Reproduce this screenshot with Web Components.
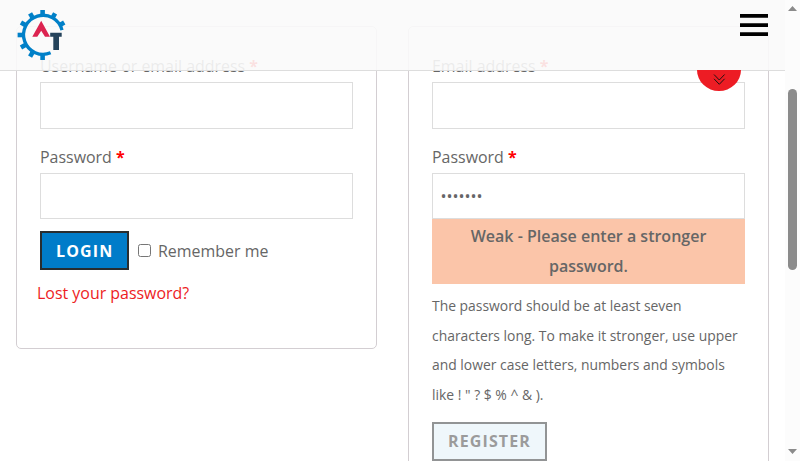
<!DOCTYPE html>
<html lang="en"><head><meta charset="utf-8"><title>My account</title>
<style>
body{margin:0;background:#fff;font:16px/29.6px "Open Sans",sans-serif;color:#666;overflow:hidden}
</style></head><body>
<account-page>
  <site-header slot="header"></site-header>
  <form-panel class="login">
    <form-field label="Username or email address"></form-field>
    <form-field label="Password" kind="password"></form-field>
    <login-actions></login-actions>
  </form-panel>
  <form-panel class="register">
    <form-field label="Email address"></form-field>
    <form-field label="Password" kind="password" value="1234567"></form-field>
    <password-advice></password-advice>
    <action-button muted>REGISTER</action-button>
  </form-panel>
  <scroll-rail slot="rail"></scroll-rail>
</account-page>
<script>
function define(name, html) {
  customElements.define(name, class extends HTMLElement {
    constructor() {
      super();
      this.attachShadow({mode: 'open'}).innerHTML = html;
    }
  });
}
define('account-page', `<style>
:host{display:grid;grid-template-columns:785px 15px;height:461px;overflow:hidden;position:relative}
main{display:grid;grid-template-columns:361px 361px;column-gap:31px;padding:26px 16px 0;align-items:start;height:461px;box-sizing:border-box;overflow:hidden}
::slotted(.login){height:323px}
::slotted(.register){height:470px}
</style><slot name="header"></slot><main><slot></slot></main><slot name="rail"></slot>`);

define('form-panel', `<style>
:host{display:block;box-sizing:border-box;border:1px solid #d3ced2;border-radius:5px;padding:24px 23px 0}
</style><slot></slot>`);

customElements.define('form-field', class extends HTMLElement {
  constructor() {
    super();
    this.attachShadow({mode: 'open'}).innerHTML = `<style>
:host{display:block;height:91px}
label{display:block;height:31px;line-height:30px;font-size:15.95px}
b{color:red;font-weight:700}
input{display:block;box-sizing:border-box;width:313px;height:47px;border:1px solid #ddd;padding:0 7.5px;font:16px "Open Sans",sans-serif;color:#666;background:#fff;margin:0;outline:0}
:host([kind=password]) input{height:46px}
</style><label></label><input>`;
    const label = this.shadowRoot.querySelector('label');
    label.innerHTML = '<span></span> <b>*</b>';
    label.firstChild.textContent = this.getAttribute('label');
    const input = this.shadowRoot.querySelector('input');
    input.type = this.getAttribute('kind') || 'text';
    input.value = this.getAttribute('value') || '';
  }
});

define('action-button', `<style>
:host{display:inline-block;vertical-align:top}
button{display:block;box-sizing:border-box;height:39px;border:2px solid #282d30;background:#007cc9;color:#fff;font:700 16px/30px "Open Sans",sans-serif;letter-spacing:1.13px;padding:0 14px;margin:0;white-space:nowrap}
:host([muted]) button{background:#eff7fb;border-color:#929495;color:#9b9b9b;padding-bottom:2px}
</style><button><slot></slot></button>`);

define('login-actions', `<style>
:host{display:block}
.row{display:flex;align-items:center;height:39px;margin-top:-2px;font-size:15.95px}
input{margin:0 7px 0 9px;width:13px;height:13px}
span{padding-top:2px;margin-left:-.3px}
a{display:block;color:#ed1c24;margin:9px 0 0 -3px;font-size:15.95px}
</style><div class="row"><action-button>LOGIN</action-button><input type="checkbox"><span>Remember me</span></div><a>Lost your password?</a>`);

define('password-advice', `<style>
:host{display:block;margin-top:-14px}
.strength{box-sizing:border-box;height:65px;padding:3px 8px;background:#fbc5a9;text-align:center;font-weight:600}
.hint{font-size:13.9px;padding-top:7px;height:131px;white-space:nowrap}
</style><div class="strength">Weak - Please enter a stronger password.</div>
<div class="hint">The password should be at least seven<br>characters long. To make it stronger, use upper<br>and lower case letters, numbers and symbols<br>like ! " ? $ % ^ &amp; ).</div>`);

define('site-header', `<style>
:host{position:absolute;z-index:2;left:0;top:0;width:785px;height:71px;box-sizing:border-box;display:flex;justify-content:space-between;align-items:flex-start;padding:9px 17px 0 16px;background:rgba(250,250,250,.9);background-clip:padding-box;border-bottom:1px solid #ddd}
.menu{margin-top:4px}
.tab{position:absolute;left:697px;top:70px}
svg{display:block}
</style>
<svg width="54" height="54" viewBox="16 9 54 54"><g fill="none" stroke="#0080c8"><path stroke-width="3.3" d="M62 30.200A19.500 19.500 0 1 0 50.6 52.8"/><g id="teeth"></g></g><path fill="#dc2350" d="M41.2 20.7L50 36.7H45L41.2 30.7 37.3 36.7H32.3Z"/><path fill="#25435b" d="M50.2 32.7H61.7V36.7H59V50H53.3V36.7H50.2Z"/></svg>
<svg class="menu" width="28" height="24" viewBox="740 13 28 24"><path d="M740 14h28v3.7h-28zm0 9.2h28v3.7h-28zm0 9.100h28v3.7h-28z"/></svg>
<svg class="tab" width="44" height="21" viewBox="0 0 44 21"><path fill="#ed1c24" d="M0 0H44A22 21 0 0 1 0 0Z"/><path fill="none" stroke="#211" stroke-width="1" d="M17 4.500l5.300 5.500 5.300-5.500M17 8.800l5.300 5.500 5.300-5.500"/></svg>`);
{
  const teeth = document.querySelector('site-header').shadowRoot.getElementById('teeth');
  for (const angle of [0, -30, -60, -90, -120, -150, -180, 30, 60]) {
    const tooth = document.createElementNS('http://www.w3.org/2000/svg', 'path');
    tooth.setAttribute('d', 'M42.6 16V10');
    tooth.setAttribute('stroke-width', '4.6');
    tooth.setAttribute('transform', `rotate(${angle} 42.6 35)`);
    teeth.append(tooth);
  }
}
define('scroll-rail', `<style>
:host{display:block;background:#fcfcfc}
svg{display:block}
</style><svg width="15" height="461"><path fill="#8b8b8b" d="M3 11h9L7.5 6zM3 449h9l-4.500 5z"/><rect x="3" y="89" width="9" height="181" rx="4.5" fill="#8b8b8b"/></svg>`);
</script>
</body></html>
